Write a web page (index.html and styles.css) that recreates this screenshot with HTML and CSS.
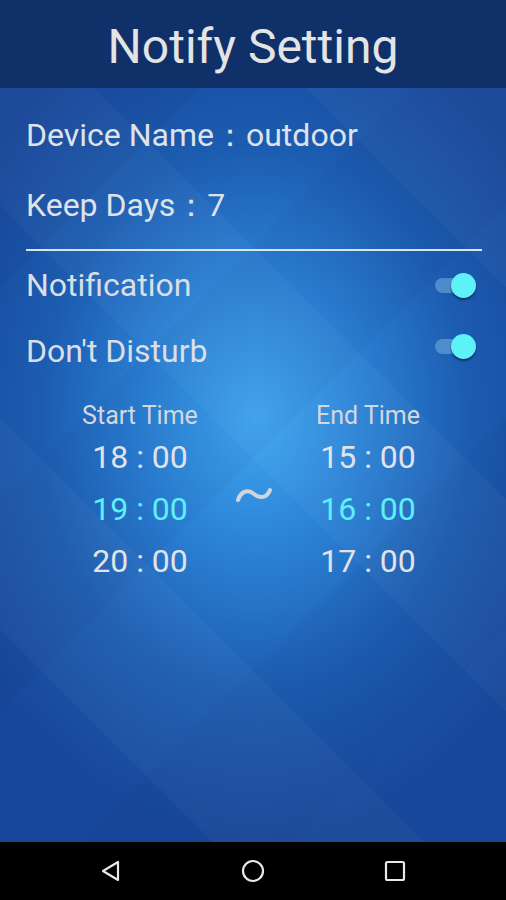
FILE: index.html
```html
<!DOCTYPE html>
<html lang="en">
<head>
    <meta charset="UTF-8">
    <meta name="viewport" content="width=device-width, initial-scale=1.0">
    <title>Notify Setting</title>
    <link rel="stylesheet" href="styles.css">
</head>
<body>
    <header class="title-bar">Notify Setting</header>

    <main class="content">
        <div class="info-row">Device Name：outdoor</div>
        <div class="info-row">Keep Days：7</div>
        <div class="divider"></div>

        <div class="switch-row">
            <span>Notification</span>
            <span class="toggle"><span class="knob"></span></span>
        </div>
        <div class="switch-row">
            <span>Don't Disturb</span>
            <span class="toggle"><span class="knob"></span></span>
        </div>

        <div class="time-picker">
            <div class="time-col">
                <div class="time-label">Start Time</div>
                <div class="time-item">18 : 00</div>
                <div class="time-item active">19 : 00</div>
                <div class="time-item">20 : 00</div>
            </div>
            <div class="tilde">
                <svg width="38" height="18" viewBox="0 0 38 18">
                    <path d="M3 14 C 6 5, 13 3, 19 8 C 25 13, 32 12, 35 4" fill="none" stroke="#d2d6dc" stroke-width="4" stroke-linecap="round"/>
                </svg>
            </div>
            <div class="time-col">
                <div class="time-label">End Time</div>
                <div class="time-item">15 : 00</div>
                <div class="time-item active">16 : 00</div>
                <div class="time-item">17 : 00</div>
            </div>
        </div>
    </main>

    <nav class="nav-bar">
        <svg width="24" height="24" viewBox="0 0 24 24">
            <path d="M19 3 L19 21 L4 12 Z" fill="none" stroke="#e8e8e8" stroke-width="2.2" stroke-linejoin="round"/>
        </svg>
        <svg width="24" height="24" viewBox="0 0 24 24">
            <circle cx="12" cy="12" r="10" fill="none" stroke="#e8e8e8" stroke-width="2.2"/>
        </svg>
        <svg width="24" height="24" viewBox="0 0 24 24">
            <rect x="3" y="3" width="18" height="18" rx="1.5" fill="none" stroke="#e8e8e8" stroke-width="2.2"/>
        </svg>
    </nav>
</body>
</html>
```

FILE: styles.css
```css
body {
    margin: 0;
    padding: 0;
    width: 506px;
    height: 900px;
    display: flex;
    flex-direction: column;
    font-family: Roboto, 'Noto Sans', sans-serif;
    color: #dfe3e8;
    background: #000;
    overflow: hidden;
}

.title-bar {
    height: 88px;
    flex: none;
    display: flex;
    align-items: center;
    justify-content: center;
    background: #10306a;
    color: #e4e4e4;
    font-size: 48px;
    padding-top: 4px;
    box-sizing: border-box;
}

.content {
    flex: 1;
    padding: 0 24px 0 26px;
    background:
        repeating-linear-gradient(45deg, rgba(255,255,255,0) 0 150px, rgba(255,255,255,0.03) 150px 300px),
        repeating-linear-gradient(-45deg, rgba(0,20,80,0) 0 150px, rgba(0,20,80,0.04) 150px 300px),
        radial-gradient(ellipse 330px 420px at 255px 330px, #3ea6f0 0%, #2a7ed2 35%, #1c5cb0 65%, #17479a 100%);
}

.info-row {
    font-size: 32px;
    height: 68px;
    line-height: 68px;
    margin-top: 2px;
}

.info-row:first-child {
    margin-top: 13px;
}

.divider {
    height: 2px;
    background: #d7e6f5;
    margin-top: 10px;
    margin-bottom: 2px;
}

.switch-row {
    display: flex;
    align-items: center;
    justify-content: space-between;
    font-size: 32px;
    height: 64px;
    color: #dadfe6;
}

.switch-row + .switch-row {
    margin-top: 2px;
}

.switch-row + .switch-row .toggle {
    margin-bottom: 10px;
}

.toggle {
    position: relative;
    width: 30px;
    height: 15px;
    border-radius: 8px;
    background: rgba(110, 170, 220, 0.6);
    margin-right: 17px;
}

.knob {
    position: absolute;
    right: -11px;
    top: -5px;
    width: 25px;
    height: 25px;
    border-radius: 50%;
    background: #5ef1f8;
    box-shadow: 0 2px 2px rgba(0, 20, 60, 0.6);
}

.time-picker {
    display: grid;
    grid-template-columns: 1fr 0 1fr;
    margin-top: 18px;
}

.time-col {
    display: flex;
    flex-direction: column;
    align-items: center;
}

.time-label {
    font-size: 25px;
    height: 30px;
    line-height: 30px;
    color: #d3d8df;
}

.time-item {
    font-size: 32px;
    height: 52px;
    line-height: 52px;
    color: #e0e4ea;
}

.time-item.active {
    color: #5ef0f8;
}

.tilde {
    width: 0;
    display: flex;
    justify-content: center;
    padding-top: 85px;
}

.tilde svg {
    flex: none;
}

.nav-bar {
    height: 58px;
    flex: none;
    background: #000;
    display: flex;
    align-items: center;
    justify-content: center;
    gap: 118px;
}
```
